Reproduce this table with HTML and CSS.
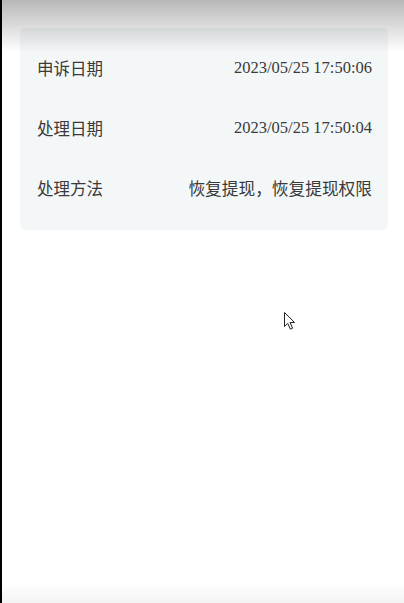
FILE: index.html
```html
<!DOCTYPE html>
<html lang="zh-CN">
<head>
    <meta charset="UTF-8">
    <meta name="viewport" content="width=device-width, initial-scale=1.0">
    <title>申诉详情</title>
    <link rel="stylesheet" href="styles.css">
</head>
<body>

<div class="page">
    <!-- Appeal details -->
    <div class="card">
        <div class="row">
            <span class="label">申诉日期</span>
            <span class="value date">2023/05/25 17:50:06</span>
        </div>
        <div class="row">
            <span class="label">处理日期</span>
            <span class="value date">2023/05/25 17:50:04</span>
        </div>
        <div class="row">
            <span class="label">处理方法</span>
            <span class="value">恢复提现，恢复提现权限</span>
        </div>
    </div>
</div>

<div class="shade-top"></div>
<div class="shade-bottom"></div>

<svg class="cursor" width="14" height="20" viewBox="0 0 14 20">
    <path d="M1.5 1.5 L1.5 15.5 L4.8 12.4 L7.3 18.2 L9.6 17.2 L7.1 11.5 L11.6 11.5 Z"
          fill="#fff" stroke="#222" stroke-width="1" stroke-linejoin="round"/>
</svg>

</body>
</html>
```

FILE: styles.css
```css
body {
    margin: 0;
    padding: 0;
    background-color: #fff;
    font-family: "Noto Sans CJK SC", "Noto Sans", sans-serif;
}
.page {
    min-height: 603px;
    border-left: 2px solid #000;
    padding: 28px 16px 0 18px;
    box-sizing: border-box;
}
.card {
    background-color: #f4f7f8;
    border-radius: 5px;
    padding: 10px 16px 12px 17px;
}
.row {
    height: 60px;
    display: flex;
    align-items: center;
    justify-content: space-between;
}
.label {
    font-size: 16.5px;
    color: #3a3a3a;
}
.value {
    font-size: 16.7px;
    color: #3a3a3a;
}
.value.date {
    font-family: "Liberation Serif", serif;
    font-size: 16.5px;
}
.shade-top {
    position: fixed;
    top: 0;
    left: 0;
    right: 0;
    height: 52px;
    background: linear-gradient(rgba(0, 0, 0, 0.28), rgba(0, 0, 0, 0));
    pointer-events: none;
}
.shade-bottom {
    position: fixed;
    bottom: 0;
    left: 0;
    right: 0;
    height: 20px;
    background: linear-gradient(rgba(0, 0, 0, 0), rgba(0, 0, 0, 0.045));
    pointer-events: none;
}
.cursor {
    position: absolute;
    left: 283px;
    top: 311px;
}
```
